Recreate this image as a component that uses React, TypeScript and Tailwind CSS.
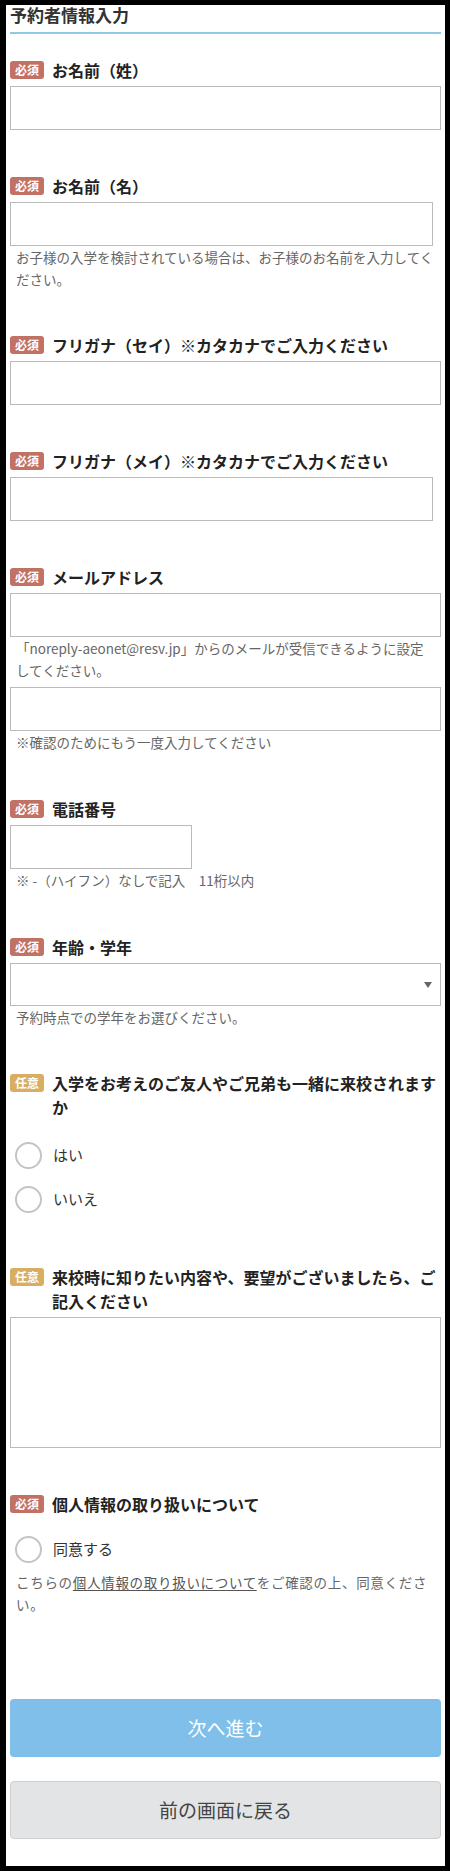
import React from "react";

type BadgeKind = "required" | "optional";

const Badge: React.FC<{ kind: BadgeKind }> = ({ kind }) => (
  <span
    className={`mt-[3px] flex h-[18px] w-[34px] shrink-0 items-center justify-center rounded-[3px] text-[12px] font-bold leading-none text-white ${
      kind === "required" ? "bg-[#c27165]" : "bg-[#d9ad62]"
    }`}
  >
    {kind === "required" ? "必須" : "任意"}
  </span>
);

const Label: React.FC<{ kind: BadgeKind; children: React.ReactNode }> = ({
  kind,
  children,
}) => (
  <div className="flex items-start gap-2">
    <Badge kind={kind} />
    <p className="text-[16px] font-bold leading-[24px] text-[#222]">
      {children}
    </p>
  </div>
);

const TextInput: React.FC<{ className?: string }> = ({ className = "w-full" }) => (
  <input
    type="text"
    className={`block h-[44px] border border-[#bbbbbb] bg-white px-2 text-[15px] outline-none ${className}`}
  />
);

const Help: React.FC<{ children: React.ReactNode; className?: string }> = ({
  children,
  className = "",
}) => (
  <p className={`pl-[6px] text-[13.5px] leading-[22px] text-[#666] ${className}`}>
    {children}
  </p>
);

const Radio: React.FC<{ label: string }> = ({ label }) => (
  <label className="flex h-[44px] items-center gap-[11px] pl-[5px]">
    <span className="h-[27px] w-[27px] rounded-full border-2 border-[#c4c4c4] bg-white" />
    <span className="text-[15px] text-[#333]">{label}</span>
  </label>
);

export default function App() {
  return (
    <div className="bg-black pb-[6px] pl-[6px] pr-[5px] pt-[5px] font-['Noto_Sans_CJK_JP',sans-serif]">
      <div className="bg-white px-[4px] pb-[27px]">
        <h2 className="border-b-2 border-[#8ecae6] pb-[7px] text-[17px] font-bold leading-[20px] text-[#333]">
          予約者情報入力
        </h2>

        <section className="mt-[24px]">
          <Label kind="required">お名前（姓）</Label>
          <div className="mt-1">
            <TextInput />
          </div>
        </section>

        <section className="mt-[44px]">
          <Label kind="required">お名前（名）</Label>
          <div className="mt-1">
            <TextInput className="w-[423px]" />
          </div>
          <Help>
            お子様の入学を検討されている場合は、お子様のお名前を入力してください。
          </Help>
        </section>

        <section className="mt-[43px]">
          <Label kind="required">フリガナ（セイ）※カタカナでご入力ください</Label>
          <div className="mt-1">
            <TextInput />
          </div>
        </section>

        <section className="mt-[44px]">
          <Label kind="required">フリガナ（メイ）※カタカナでご入力ください</Label>
          <div className="mt-1">
            <TextInput className="w-[423px]" />
          </div>
        </section>

        <section className="mt-[44px]">
          <Label kind="required">メールアドレス</Label>
          <div className="mt-1">
            <TextInput />
          </div>
          <Help className="pr-[8px]">
            「noreply-aeonet@resv.jp」からのメールが受信できるように設定してください。
          </Help>
          <div className="mt-[6px]">
            <TextInput />
          </div>
          <Help>※確認のためにもう一度入力してください</Help>
        </section>

        <section className="mt-[44px]">
          <Label kind="required">電話番号</Label>
          <div className="mt-1">
            <TextInput className="w-[182px]" />
          </div>
          <Help>※ -（ハイフン）なしで記入　11桁以内</Help>
        </section>

        <section className="mt-[44px]">
          <Label kind="required">年齢・学年</Label>
          <div className="relative mt-1">
            <select className="block h-[43px] w-full appearance-none border border-[#bbbbbb] bg-white px-2 text-[15px] outline-none">
              <option value=""></option>
            </select>
            <svg
              viewBox="0 0 8 6"
              className="pointer-events-none absolute right-[9px] top-[19px] h-[6px] w-[8px] fill-[#666]"
            >
              <polygon points="0,0 8,0 4,6" />
            </svg>
          </div>
          <Help>予約時点での学年をお選びください。</Help>
        </section>

        <section className="mt-[43px]">
          <Label kind="optional">
            入学をお考えのご友人やご兄弟も一緒に来校されますか
          </Label>
          <div className="mt-[14px]">
            <Radio label="はい" />
            <Radio label="いいえ" />
          </div>
        </section>

        <section className="mt-[44px]">
          <Label kind="optional">
            来校時に知りたい内容や、要望がございましたら、ご記入ください
          </Label>
          <textarea className="mt-1 block h-[131px] w-full resize-none border border-[#bbbbbb] bg-white p-2 outline-none" />
        </section>

        <section className="mt-[44px]">
          <Label kind="required">個人情報の取り扱いについて</Label>
          <div className="mt-[11px]">
            <Radio label="同意する" />
          </div>
          <Help className="pr-[4px] tracking-[0.7px]">
            こちらの
            <a href="#" className="text-[#555] underline underline-offset-2">
              個人情報の取り扱いについて
            </a>
            をご確認の上、同意ください。
          </Help>
        </section>

        <div className="mt-[84px] flex flex-col gap-[24px]">
          <button className="h-[58px] w-full rounded-[4px] bg-[#7fbfe9] text-[19px] text-white">
            次へ進む
          </button>
          <button className="h-[58px] w-full rounded-[4px] border border-[#cfcfcf] bg-[#e3e4e6] text-[19px] text-[#444]">
            前の画面に戻る
          </button>
        </div>
      </div>
    </div>
  );
}
